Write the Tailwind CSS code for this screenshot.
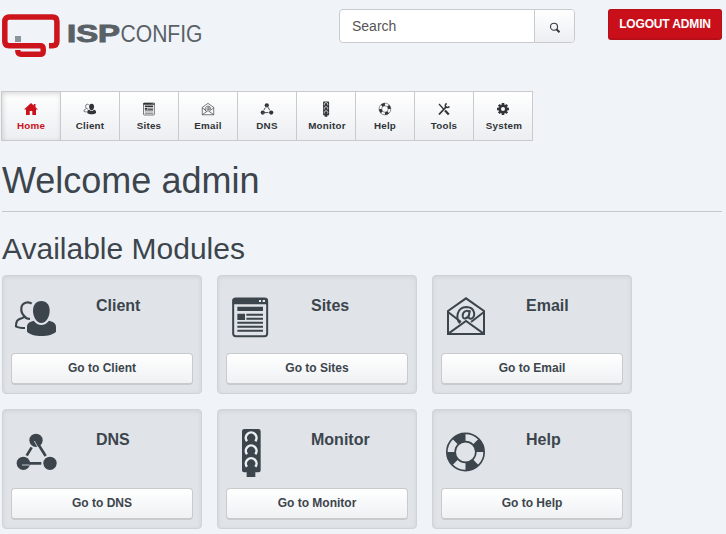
<!DOCTYPE html>
<html lang="en">
<head>
<meta charset="utf-8">
<title>ISPConfig</title>
<script src="https://cdn.jsdelivr.net/npm/@tailwindcss/browser@4"></script>
</head>
<body class="h-[534px] overflow-hidden bg-[#f0f4f8] font-['Liberation_Sans',Arial,sans-serif] text-[#3c454c]">
<svg class="hidden">
  <!-- shared module icons -->
  <symbol id="client" overflow="visible">
    <path d="M95 101C85 93 66 97 64 114c-1 11 3 19 9 24c-1 4-3 5-6 6c-7 2-13 4-16 9c-3 6-3 11-3 16c8 5 16 5 27 5M73 138c3 6 9 9 17 9" fill="none" stroke="currentColor" stroke-width="6.500"/>
    <path d="M124 93c16 0 25 12 25 29c0 18-11 37-25 37s-25-19-25-37c0-17 9-29 25-29z" fill="currentColor"/>
    <path d="M101 152c12 17 34 17 46 0c14 3 21 8 21 19v14c-14 17-73 17-87 0v-14c0-11 7-16 20-19z" fill="currentColor"/>
  </symbol>
  <symbol id="sites" overflow="visible">
    <rect x="69.500" y="85.500" width="102" height="113" rx="8" fill="none" stroke="currentColor" stroke-width="6"/>
    <path d="M68 86h105v17H68zM82 110h77v13H82zM82 131h23v19H82zM109 131h50v6h-50zM109 143h50v6h-50zM82 155h77v6H82zM82 167h77v6H82zM82 179h77v6H82z" fill="currentColor"/>
    <path d="M147 90h6v6h-6zM158 90h7v6h-7z" fill="#e9ecef"/>
  </symbol>
  <symbol id="email" overflow="visible">
    <g fill="none" stroke="currentColor" stroke-width="6">
      <path d="M69 192V123L123 85l54 38v69zM69 126l39 30M177 126l-39 30M70 191l53-38 53 38"/>
      <path d="M105 160c-14-14-10-48 19-49c28 0 29 33 14 35c-8 1-8-6-6-12l3-13M133 127c-5-9-19-4-20 9c-1 14 15 12 20-3"/>
    </g>
  </symbol>
  <symbol id="dns" overflow="visible">
    <g fill="currentColor"><circle cx="108" cy="106" r="20"/><circle cx="70" cy="175" r="20"/><circle cx="150" cy="175" r="20"/></g>
    <path d="M95 127L80 152M111 112l26 41M76 175h48" fill="none" stroke="currentColor" stroke-width="8"/>
    <path d="M103 108l11 20M66 180h22" fill="none" stroke="#e0e4e9" stroke-width="2.500"/>
  </symbol>
  <symbol id="monitor" overflow="visible">
    <path d="M103 72h42q7 0 7 7v117q0 6-6 6h-10v14h-26v-14h-8q-6 0-6-6V79q0-7 7-7z" fill="currentColor"/>
    <path d="M111 108.500a16 16 0 1 1 25 0M111 147.500a16 16 0 1 1 25 0M111 185.500a16 16 0 1 1 25 0" fill="none" stroke="#eceff2" stroke-width="7.500"/>
  </symbol>
  <symbol id="help" overflow="visible">
    <circle cx="121.500" cy="141" r="56" fill="none" stroke="currentColor" stroke-width="5"/>
    <circle cx="121.500" cy="141" r="31" fill="none" stroke="currentColor" stroke-width="5"/>
    <path d="M121.500 85v25a31 31 0 0 0-22 9L82 101q16-16 39.500-16zM177 141h-25a31 31 0 0 0-9-22l18-18q16 16 16 40zM121.500 197v-25a31 31 0 0 0 22-9l17.500 18q-16 16-39.500 16zM66 141h25a31 31 0 0 0 9 22l-18 18q-16-16-16-40z" fill="currentColor"/>
  </symbol>
</svg>

<header class="flex h-[91px] items-start pr-1 pl-[2px] pt-[9px]">
  <svg class="mt-[3px] h-[48px] w-[206px] shrink-0 overflow-visible" viewBox="2 12 206 48">
    <path d="M49 45.700h3.500q4.400 0 4.400-4.400V21.500q0-4.400-4.400-4.400H9.200q-4.400 0-4.400 4.400v19.800q0 4.400 4.400 4.400h31q3 0 3 3v2.600q0 3-3 3H21q-3.200 0-3.200-4.300" fill="none" stroke="#cd141c" stroke-width="5.500"/>
    <path d="M15 36h6v6h-6z" fill="#8c959d"/>
    <text x="67" y="42" textLength="53" lengthAdjust="spacingAndGlyphs" font-size="23" font-weight="bold" fill="#596167" stroke="#596167" stroke-width=".9">ISP</text>
    <text x="120.500" y="42" textLength="82" lengthAdjust="spacingAndGlyphs" font-size="23" fill="#596167">CONFIG</text>
  </svg>
  <form class="ml-[131px] flex h-[34px] w-[236px] overflow-hidden rounded-[4px] border border-[#c8cacd] bg-white">
    <div class="flex-1 pl-[12px] text-[14px] leading-[33px] text-[#555]">Search</div>
    <div class="flex w-[40px] items-center justify-center border-l border-[#c8cacd] bg-linear-to-b from-white to-[#eceef1]">
      <svg class="mt-[3px] h-[12px] w-[12px]" viewBox="0 0 12 12" fill="none" stroke="#34393d"><circle cx="5" cy="4.700" r="3.500" stroke-width="1.100"/><path d="M7.500 7.200L10.500 10.300" stroke-width="2"/></svg>
    </div>
  </form>
  <div class="ml-[33px] h-[31px] w-[114px] rounded-[3px] border border-b-2 border-[#b70f17] bg-[#c9101a] text-center text-[12px] leading-[28px] font-bold tracking-[-.15px] whitespace-nowrap text-white">LOGOUT ADMIN</div>
</header>

<nav class="ml-px flex h-[50px] w-[532px] border border-r-0 border-[#c8cacc] bg-linear-to-b from-white to-[#eceef1] text-[9.800px] leading-[12px] font-bold tracking-[.25px] text-[#303437]">
  <div class="flex w-[59px] flex-col items-center border-r border-[#c8cacc] pt-[9px] text-[#cb111b] shadow-[inset_1px_2px_5px_#00000026]"><svg class="mb-[3px] h-[16px] w-[16px]" viewBox="0 0 16 16"><path d="M8 2L1 8.500h2V14h3.700v-4h2.600v4H13V8.500h2l-2.500-2.300V3h-1.700v1.600z" fill="currentColor"/></svg>Home</div>
  <div class="flex w-[59px] flex-col items-center border-r border-[#c8cacc] pt-[9px]"><svg class="mb-[3px] h-[16px] w-[16px]" viewBox="28 65 160 160"><use href="#client"/></svg>Client</div>
  <div class="flex w-[59px] flex-col items-center border-r border-[#c8cacc] pt-[9px]"><svg class="mb-[3px] h-[16px] w-[16px]" viewBox="46 67 150 150"><use href="#sites"/></svg>Sites</div>
  <div class="flex w-[59px] flex-col items-center border-r border-[#c8cacc] pt-[9px]"><svg class="mb-[3px] h-[16px] w-[16px]" viewBox="48 63 150 150"><use href="#email"/></svg>Email</div>
  <div class="flex w-[59px] flex-col items-center border-r border-[#c8cacc] pt-[9px]"><svg class="mb-[3px] h-[16px] w-[16px]" viewBox="34 65 152 152"><use href="#dns"/></svg>DNS</div>
  <div class="flex w-[59px] flex-col items-center border-r border-[#c8cacc] pt-[9px]"><svg class="mb-[3px] h-[16px] w-[16px]" viewBox="48 68 150 150"><use href="#monitor"/></svg><span class="pl-[2px]">Monitor</span></div>
  <div class="flex w-[59px] flex-col items-center border-r border-[#c8cacc] pt-[9px]"><svg class="mb-[3px] h-[16px] w-[16px]" viewBox="46 65 152 152"><use href="#help"/></svg>Help</div>
  <div class="flex w-[59px] flex-col items-center border-r border-[#c8cacc] pt-[9px]"><svg class="mb-[3px] h-[16px] w-[16px]" viewBox="0 0 16 16" fill="none" stroke="currentColor"><path d="M3 3l4.500 5" stroke-width="1.200"/><path d="M9 9.500l3.800 4" stroke-width="2.200"/><path d="M3 13.500l7.500-8" stroke-width="1.800"/><path d="M13.500 5.500q-2 1.800-3.600.4T10.600 2.400" stroke-width="1.500"/></svg>Tools</div>
  <div class="flex w-[59px] flex-col items-center border-r border-[#c8cacc] pt-[9px]"><svg class="mb-[3px] h-[16px] w-[16px]" viewBox="0 0 16 16" fill="none" stroke="currentColor"><circle cx="8" cy="8" r="3.300" stroke-width="2.600"/><path d="M8 2v2M8 12v2M2 8h2M12 8h2M3.800 3.800l1.400 1.400M10.800 10.800l1.400 1.400M3.800 12.200l1.400-1.400M10.800 5.200l1.400-1.400" stroke-width="2.600"/></svg><span class="pl-[2px]">System</span></div>
</nav>

<main class="w-[722px] pl-[2px]">
  <h1 class="h-[71px] border-b border-[#c5c9ce] pt-[20px] text-[36px] leading-[40px]">Welcome admin</h1>
  <h2 class="h-[63px] pt-[20px] text-[30px] leading-[33px]">Available Modules</h2>
  <div class="grid grid-cols-[200px_200px_200px] grid-rows-[119px_120px] gap-[15px]">
    <section class="flex flex-col justify-between rounded-[4px] border border-[#d0d4d7] bg-[#e0e4e9] px-[8px] pb-[8px] shadow-[inset_0_1px_4px_#00000014]">
      <div class="flex pl-[3px]"><svg class="mt-[19px] h-[50px] w-[44px]" viewBox="42 75 132 150"><use href="#client"/></svg><h3 class="ml-[38px] pt-[20px] text-[16px] leading-[20px] font-bold">Client</h3></div>
      <div class="h-[32px] rounded-[4px] border border-b-2 border-[#c8cacb] bg-linear-to-b from-white to-[#eff1f3] text-center text-[12px] leading-[29px] font-bold">Go to Client</div>
    </section>
    <section class="flex flex-col justify-between rounded-[4px] border border-[#d0d4d7] bg-[#e0e4e9] px-[8px] pb-[8px] shadow-[inset_0_1px_4px_#00000014]">
      <div class="flex pl-[3px]"><svg class="mt-[19px] h-[50px] w-[44px]" viewBox="57 75 132 150"><use href="#sites"/></svg><h3 class="ml-[38px] pt-[20px] text-[16px] leading-[20px] font-bold">Sites</h3></div>
      <div class="h-[32px] rounded-[4px] border border-b-2 border-[#c8cacb] bg-linear-to-b from-white to-[#eff1f3] text-center text-[12px] leading-[29px] font-bold">Go to Sites</div>
    </section>
    <section class="flex flex-col justify-between rounded-[4px] border border-[#d0d4d7] bg-[#e0e4e9] px-[8px] pb-[8px] shadow-[inset_0_1px_4px_#00000014]">
      <div class="flex pl-[3px]"><svg class="mt-[19px] h-[50px] w-[44px]" viewBox="57 75 132 150"><use href="#email"/></svg><h3 class="ml-[38px] pt-[20px] text-[16px] leading-[20px] font-bold">Email</h3></div>
      <div class="h-[32px] rounded-[4px] border border-b-2 border-[#c8cacb] bg-linear-to-b from-white to-[#eff1f3] text-center text-[12px] leading-[29px] font-bold">Go to Email</div>
    </section>
    <section class="flex flex-col justify-between rounded-[4px] border border-[#d0d4d7] bg-[#e0e4e9] px-[8px] pb-[8px] shadow-[inset_0_1px_4px_#00000014]">
      <div class="flex pl-[3px]"><svg class="mt-[19px] h-[50px] w-[44px]" viewBox="42 72 132 150"><use href="#dns"/></svg><h3 class="ml-[38px] pt-[20px] text-[16px] leading-[20px] font-bold">DNS</h3></div>
      <div class="h-[32px] rounded-[4px] border border-b-2 border-[#c8cacb] bg-linear-to-b from-white to-[#eff1f3] text-center text-[12px] leading-[29px] font-bold">Go to DNS</div>
    </section>
    <section class="flex flex-col justify-between rounded-[4px] border border-[#d0d4d7] bg-[#e0e4e9] px-[8px] pb-[8px] shadow-[inset_0_1px_4px_#00000014]">
      <div class="flex pl-[3px]"><svg class="mt-[19px] h-[50px] w-[44px]" viewBox="57 72 132 150"><use href="#monitor"/></svg><h3 class="ml-[38px] pt-[20px] text-[16px] leading-[20px] font-bold">Monitor</h3></div>
      <div class="h-[32px] rounded-[4px] border border-b-2 border-[#c8cacb] bg-linear-to-b from-white to-[#eff1f3] text-center text-[12px] leading-[29px] font-bold">Go to Monitor</div>
    </section>
    <section class="flex flex-col justify-between rounded-[4px] border border-[#d0d4d7] bg-[#e0e4e9] px-[8px] pb-[8px] shadow-[inset_0_1px_4px_#00000014]">
      <div class="flex pl-[3px]"><svg class="mt-[19px] h-[50px] w-[44px]" viewBox="57 72 132 150"><use href="#help"/></svg><h3 class="ml-[38px] pt-[20px] text-[16px] leading-[20px] font-bold">Help</h3></div>
      <div class="h-[32px] rounded-[4px] border border-b-2 border-[#c8cacb] bg-linear-to-b from-white to-[#eff1f3] text-center text-[12px] leading-[29px] font-bold">Go to Help</div>
    </section>
  </div>
</main>
</body>
</html>
